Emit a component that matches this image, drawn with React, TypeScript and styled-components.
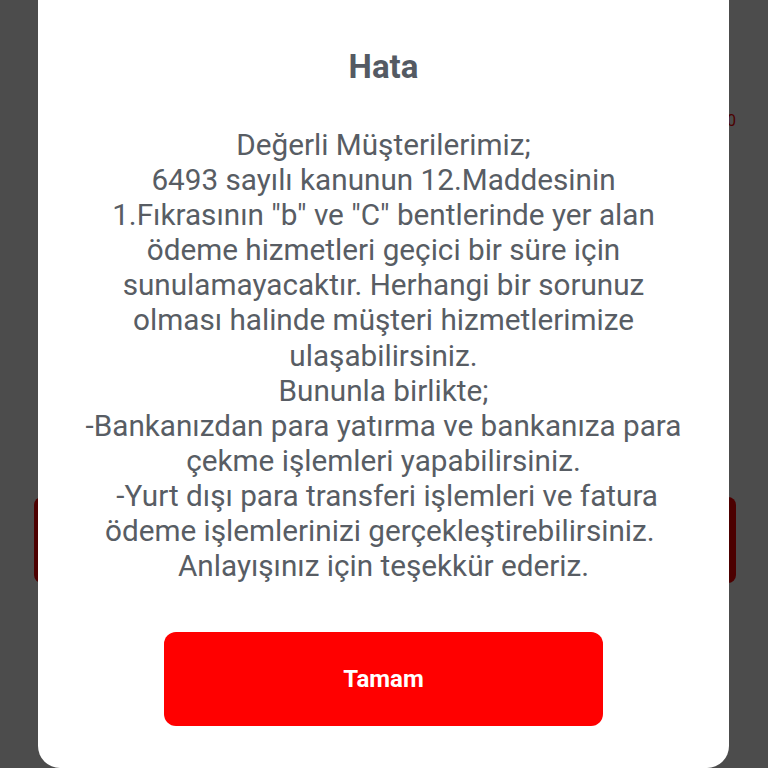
import React from "react";
import styled, { createGlobalStyle } from "styled-components";

const GlobalStyle = createGlobalStyle`
  html, body {
    margin: 0;
    padding: 0;
    background: #ffffff;
  }
  body {
    font-family: Roboto, "Noto Sans", "Liberation Sans", sans-serif;
  }
`;

const lines = [
  "Değerli Müşterilerimiz;",
  "6493 sayılı kanunun 12.Maddesinin",
  "1.Fıkrasının \"b\" ve \"C\" bentlerinde yer alan",
  "ödeme hizmetleri geçici bir süre için",
  "sunulamayacaktır. Herhangi bir sorunuz",
  "olması halinde müşteri hizmetlerimize",
  "ulaşabilirsiniz.",
  "Bununla birlikte;",
  "-Bankanızdan para yatırma ve bankanıza para",
  "çekme işlemleri yapabilirsiniz.",
  " -Yurt dışı para transferi işlemleri ve fatura",
  "ödeme işlemlerinizi gerçekleştirebilirsiniz. ",
  "Anlayışınız için teşekkür ederiz.",
];

export default function App() {
  return (
    <>
      <GlobalStyle />
      <Screen>
        <PageBehind>
          <AmountRow>
            <Amount>0</Amount>
          </AmountRow>
          <ActionButton />
        </PageBehind>
        <Overlay />
        <Dialog>
          <Title>Hata</Title>
          <Message>
            {lines.map((line, i) => (
              <Line key={i}>{line}</Line>
            ))}
          </Message>
          <ConfirmButton>Tamam</ConfirmButton>
        </Dialog>
      </Screen>
    </>
  );
}

// Styled Components
const Screen = styled.div`
  position: relative;
  width: 768px;
  height: 768px;
  overflow: hidden;
`;

const PageBehind = styled.div`
  display: flex;
  flex-direction: column;
  padding: 106px 32px 0 34px;
`;

const AmountRow = styled.div`
  display: flex;
  justify-content: flex-end;
  height: 30px;
`;

const Amount = styled.span`
  color: #ff0000;
  font-size: 16px;
  line-height: 30px;
`;

const ActionButton = styled.div`
  margin-top: 361px;
  height: 86px;
  background: #ff0000;
  border-radius: 8px;
`;

const Overlay = styled.div`
  position: absolute;
  inset: 0;
  background: rgba(0, 0, 0, 0.7);
`;

const Dialog = styled.div`
  position: absolute;
  left: 38px;
  right: 39px;
  top: 0;
  bottom: 0;
  background: #ffffff;
  border-radius: 0 0 22px 22px;
  display: flex;
  flex-direction: column;
  align-items: center;
  padding: 48px 0 0;
  box-sizing: border-box;
`;

const Title = styled.h2`
  margin: 0;
  font-size: 33px;
  line-height: 38px;
  font-weight: 700;
  color: #545a63;
`;

const Message = styled.div`
  margin-top: 41px;
  display: flex;
  flex-direction: column;
  align-items: center;
  color: #585d64;
  font-size: 29.7px;
  line-height: 35.1px;
  text-align: center;
`;

const Line = styled.span`
  white-space: pre;
`;

const ConfirmButton = styled.button`
  margin-top: 49px;
  width: 439px;
  height: 94px;
  border: none;
  border-radius: 12px;
  background: #ff0000;
  color: #ffffff;
  font-family: Roboto, "Noto Sans", "Liberation Sans", sans-serif;
  font-size: 24px;
  font-weight: 700;
  cursor: pointer;
`;
